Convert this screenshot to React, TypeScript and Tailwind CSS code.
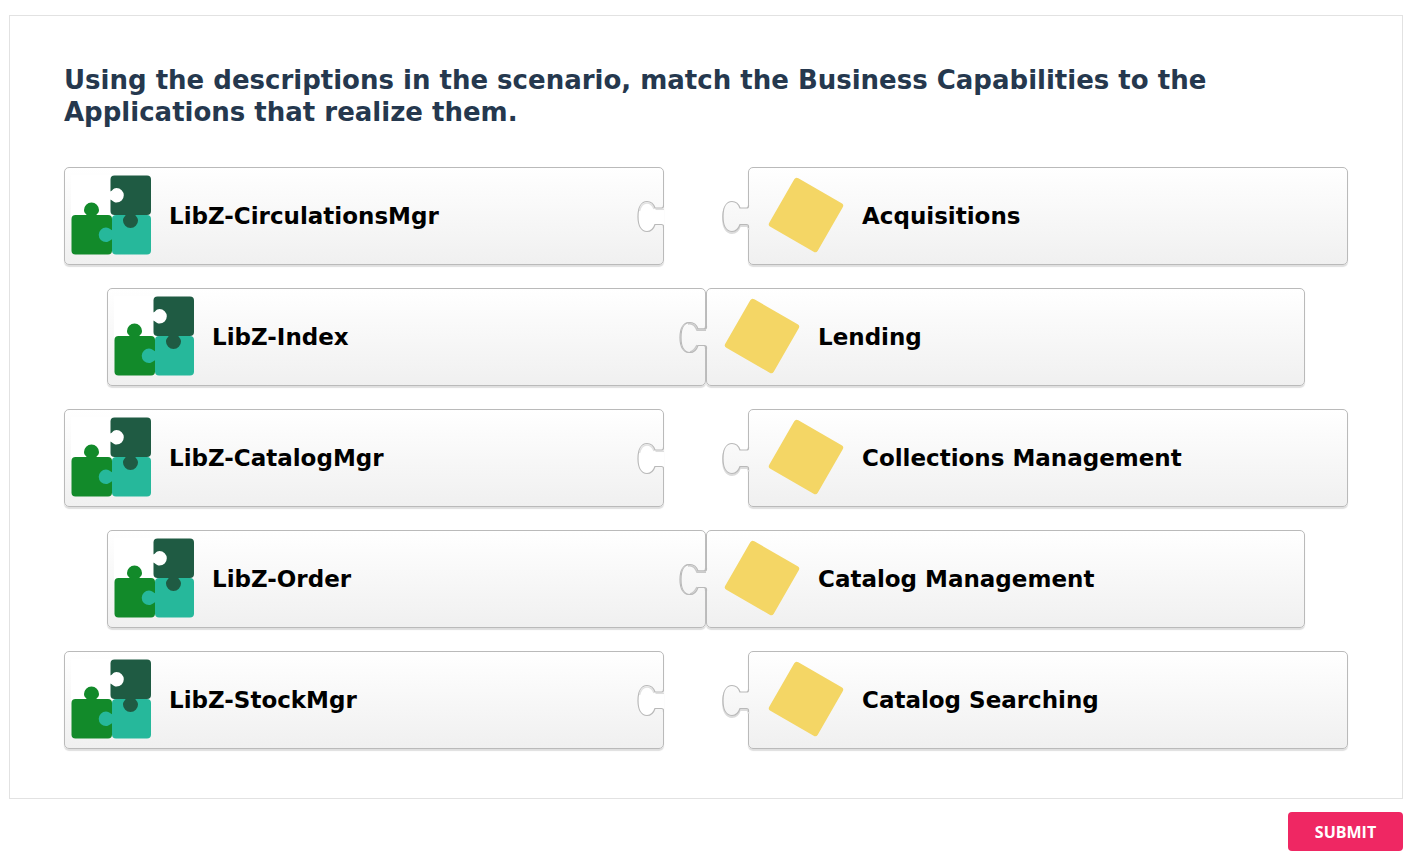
const pairs = [
  { application: "LibZ-CirculationsMgr", capability: "Acquisitions", matched: false },
  { application: "LibZ-Index", capability: "Lending", matched: true },
  { application: "LibZ-CatalogMgr", capability: "Collections Management", matched: false },
  { application: "LibZ-Order", capability: "Catalog Management", matched: true },
  { application: "LibZ-StockMgr", capability: "Catalog Searching", matched: false },
];

const CONNECTOR =
  "M26.5 8V9Q26.5 11 24.5 11H18C16.5 6.5 14 4.5 10 4.5C4.5 4.5 1 10 1 19.5S4.5 34.5 10 34.5C14 34.5 16.5 32 18 27.5H24.5Q26.5 27.5 26.5 29.5V31";

const PIECE =
  "relative flex h-[98px] min-w-0 items-center rounded-[5px] border border-[#bababa] bg-linear-to-b from-white to-[#f0f0f0] shadow-[0_2px_1px_#dfdfdf]";

function PuzzleIcon() {
  return (
    <svg viewBox="0 0 80 80" className="mb-0.5 size-20 shrink-0" aria-hidden="true">
      <path d="M0 0H44V44H0Z" fill="#fff" />
      <rect x="0.5" y="40" width="40.5" height="39.5" rx="4" fill="#128a2a" />
      <path d="M16 41C16 39 13 38.5 13 35A7.5 7.5 0 0 1 28 35C28 38.5 25 39 25 41Z" fill="#128a2a" />
      <rect x="41" y="40" width="39" height="39.5" rx="4" fill="#26b89b" />
      <path d="M42 55.5C40 55.5 38.5 52.5 35 52.5A7.3 7.3 0 0 0 35 67.1C38.5 67.1 40 64 42 64Z" fill="#26b89b" />
      <rect x="39.5" y="0.5" width="40.5" height="39.5" rx="4" fill="#1f5b43" />
      <path d="M55 39C55 41 52 42 52 45.5A7.5 7.5 0 0 0 67 45.5C67 42 64 41 64 39Z" fill="#1f5b43" />
      <path d="M39 16.500C41 16.500 42 13 45.500 13A7.300 7.300 0 0 1 45.500 27.600C42 27.600 41 24.500 39 24.500Z" fill="#fff" />
    </svg>
  );
}

function DiamondIcon() {
  return (
    <svg viewBox="0 0 80 80" className="mb-0.5 size-20 shrink-0" aria-hidden="true">
      <rect x="12" y="12" width="56" height="56" rx="3" fill="#f4d665" transform="rotate(30 40 40)" />
    </svg>
  );
}

function Notch() {
  return (
    <svg viewBox="0 0 27 40" className="absolute top-[29px] -right-px h-10 w-[27px]" aria-hidden="true">
      <path d={CONNECTOR + "H27V8Z"} fill="#fff" />
      <path d="M18.5 12.3H27" stroke="#dedede" strokeWidth="1.5" />
      <path d="M2.5 14C4 8 6.5 6 10 6C13.5 6 15.5 8 17 12" fill="none" stroke="#e2e2e2" strokeWidth="1.5" />
      <path d={CONNECTOR} fill="none" stroke="#b9b9b9" strokeWidth="1.2" />
    </svg>
  );
}

function Tab({ matched }: { matched: boolean }) {
  return (
    <svg viewBox="0 0 28 40" className="absolute top-[29px] -left-[27px] h-10 w-7" aria-hidden="true">
      <defs>
        <linearGradient id="tab-fill" x1="0" y1="0" x2="0" y2="1">
          <stop offset="0" stopColor="#fafafa" />
          <stop offset="1" stopColor="#f5f5f5" />
        </linearGradient>
      </defs>
      {!matched && (
        <path d={CONNECTOR} fill="none" stroke="#dcdcdc" strokeWidth="2" transform="translate(0 1.5)" />
      )}
      <path d={CONNECTOR + "H28V8Z"} fill="url(#tab-fill)" />
      {matched && (
        <path
          d="M8 6C12 5 15 7 17 12.3H26M10 34C13.5 33 15 31 17 27"
          fill="none"
          stroke="#c9c9c9"
          strokeWidth="1.5"
        />
      )}
      <path d={CONNECTOR} fill="none" stroke="#b9b9b9" strokeWidth="1.2" />
    </svg>
  );
}

export default function App() {
  return (
    <main className="px-[9px] pt-[15px] font-[Verdana,'DejaVu_Sans',sans-serif]">
      <section className="border border-[#e2e2e2] px-[54px] pt-12 pb-[49px]">
        <h1 className="text-[26px] leading-8 font-bold text-[#25384e]">
          Using the descriptions in the scenario, match the Business Capabilities to the Applications that realize them.
        </h1>
        <ul className="mt-[39px] flex flex-col gap-[23px]">
          {pairs.map(({ application, capability, matched }) => (
            <li key={application} className={matched ? "grid grid-cols-2 px-[43px]" : "grid grid-cols-2 gap-[84px]"}>
              <div className={PIECE + " gap-[18px] pl-[6px]"}>
                <PuzzleIcon />
                <span className="text-[23px] leading-7 font-bold text-black">{application}</span>
                <Notch />
              </div>
              <div className={PIECE + (matched ? " gap-4 pl-[15px]" : " gap-4 pl-[17px]")}>
                <DiamondIcon />
                <span className="text-[23px] leading-7 font-bold text-black">{capability}</span>
                <Tab matched={matched} />
              </div>
            </li>
          ))}
        </ul>
      </section>
      <div className="flex justify-end pt-[13px]">
        <button
          type="button"
          className="h-[39px] w-[115px] rounded-[4px] bg-[#ef2763] font-['Open_Sans',sans-serif] text-base font-bold text-white"
        >
          SUBMIT
        </button>
      </div>
    </main>
  );
}
